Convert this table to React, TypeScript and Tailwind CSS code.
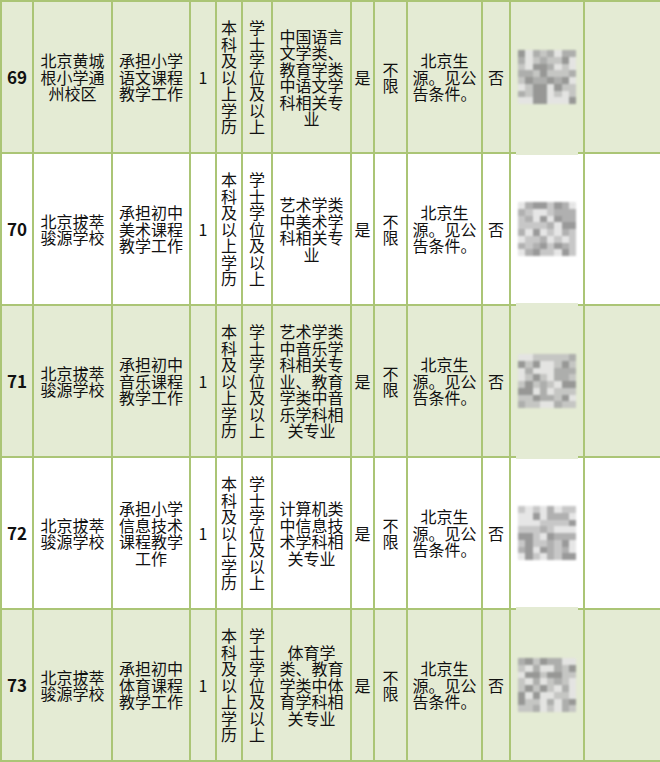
const GREEN = '#e4ebd4'

interface Row {
  no: string
  school: string[]
  duty: string[]
  major: string[]
  qr: number
}

const ROWS: Row[] = [
  {
    no: '69',
    school: ['北京黄城', '根小学通', '州校区'],
    duty: ['承担小学', '语文课程', '教学工作'],
    major: ['中国语言', '文学类、', '教育学类', '中语文学', '科相关专', '业'],
    qr: 3,
  },
  {
    no: '70',
    school: ['北京拔萃', '骏源学校'],
    duty: ['承担初中', '美术课程', '教学工作'],
    major: ['艺术学类', '中美术学', '科相关专', '业'],
    qr: 11,
  },
  {
    no: '71',
    school: ['北京拔萃', '骏源学校'],
    duty: ['承担初中', '音乐课程', '教学工作'],
    major: ['艺术学类', '中音乐学', '科相关专', '业、教育', '学类中音', '乐学科相', '关专业'],
    qr: 23,
  },
  {
    no: '72',
    school: ['北京拔萃', '骏源学校'],
    duty: ['承担小学', '信息技术', '课程教学', '工作'],
    major: ['计算机类', '中信息技', '术学科相', '关专业'],
    qr: 37,
  },
  {
    no: '73',
    school: ['北京拔萃', '骏源学校'],
    duty: ['承担初中', '体育课程', '教学工作'],
    major: ['体育学', '类、教育', '学类中体', '育学科相', '关专业'],
    qr: 51,
  },
]

const WIDTHS = [32, 79, 78, 26, 26, 30, 79, 23, 33, 75, 28, 74, 77]

function Lines({ lines }: { lines: string[] }) {
  return (
    <>
      {lines.map((l, i) => (
        <div key={i} className="whitespace-nowrap">
          {l}
        </div>
      ))}
    </>
  )
}

// blurred code thumbnail, made of grey squares
function Blur({ seed }: { seed: number }) {
  const cells: string[] = []
  let s = seed * 9301 + 49297
  for (let i = 0; i < 64; i++) {
    s = (s * 9301 + 49297) % 233280
    const r = s / 233280
    const shade = r < 0.25 ? '#8f8f8f' : r < 0.5 ? '#a8a8a8' : r < 0.78 ? '#c2c2c2' : '#e4e4e4'
    cells.push(shade)
  }
  return (
    <div className="mx-auto grid h-[54px] w-[58px] grid-cols-8 blur-[1px] opacity-90">
      {cells.map((c, i) => (
        <div key={i} style={{ backgroundColor: c }} />
      ))}
    </div>
  )
}

export default function App() {
  const cell = 'border-2 border-[#abc576] p-0 text-center align-middle'
  return (
    <div
      className="w-[660px] bg-white text-[16px] leading-[16.5px] text-[#111]"
      style={{ fontFamily: '"Noto Sans CJK SC", "Noto Sans", sans-serif' }}
    >
      <table className="w-[660px] table-fixed border-collapse">
        <colgroup>
          {WIDTHS.map((w, i) => (
            <col key={i} style={{ width: w }} />
          ))}
        </colgroup>
        <tbody>
          {ROWS.map((r, idx) => {
            const bg = idx % 2 === 0 ? 'bg-[#e4ebd4]' : 'bg-white'
            return (
              <tr key={r.no} className={`${bg} h-[152px]`}>
                <td className={`${cell} text-[17px] font-bold`}>{r.no}</td>
                <td className={cell}>
                  <Lines lines={r.school} />
                </td>
                <td className={cell}>
                  <Lines lines={r.duty} />
                </td>
                <td className={cell}>1</td>
                <td className={cell}>
                  <Lines lines={['本', '科', '及', '以', '上', '学', '历']} />
                </td>
                <td className={cell}>
                  <Lines lines={['学', '士', '学', '位', '及', '以', '上']} />
                </td>
                <td className={cell}>
                  <Lines lines={r.major} />
                </td>
                <td className={cell}>是</td>
                <td className={cell}>
                  <Lines lines={['不', '限']} />
                </td>
                <td className={cell}>
                  <Lines lines={['北京生', '源。见公', '告条件。']} />
                </td>
                <td className={cell}>否</td>
                <td className={`${cell} relative`}>
                  <Blur seed={r.qr} />
                  {idx < ROWS.length - 1 && (
                    <div
                      className="absolute bottom-[-3px] left-[5px] z-10 h-[4px] w-[62px]"
                      style={{ backgroundColor: GREEN }}
                    />
                  )}
                </td>
                <td className={cell} />
              </tr>
            )
          })}
        </tbody>
      </table>
    </div>
  )
}
